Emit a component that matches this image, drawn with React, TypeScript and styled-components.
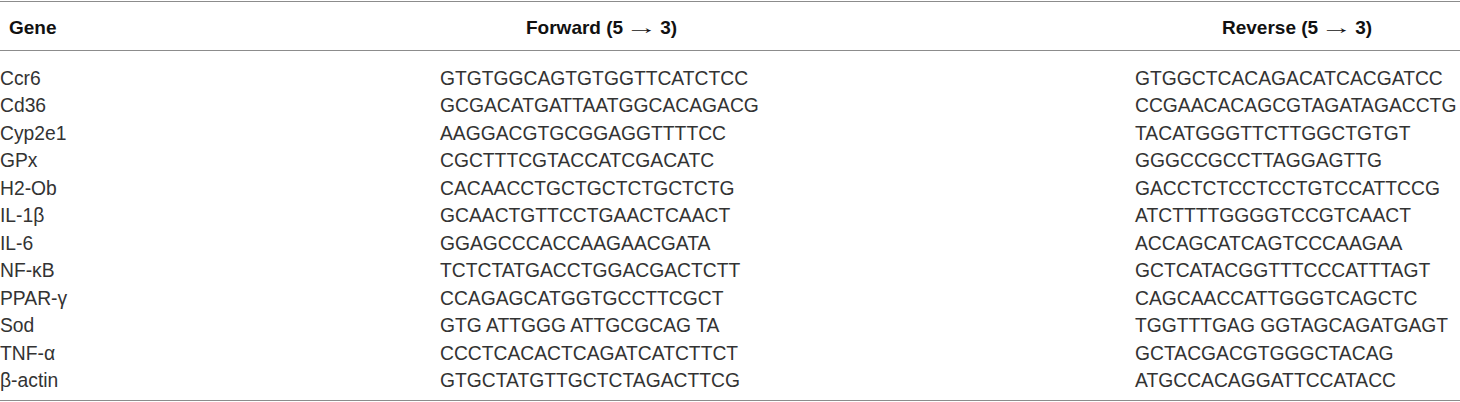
import React from 'react';
import styled, { createGlobalStyle } from 'styled-components';

const GlobalStyle = createGlobalStyle`
  body {
    margin: 0;
    background: #ffffff;
    font-family: "Liberation Sans", Arial, Helvetica, sans-serif;
  }
`;

const TableWrapper = styled.div`
  width: 1460px;
  margin-top: 1px;
  border-top: 1px solid #8c8c8c;
  border-bottom: 1px solid #8c8c8c;
`;

const Row = styled.div`
  display: grid;
  grid-template-columns: 440px 695px 1fr;
  font-size: 19.3px;
  line-height: 27.5px;
  white-space: nowrap;
`;

const HeaderRow = styled(Row)`
  padding: 12px 0 8px;
  border-bottom: 1px solid #8c8c8c;
  font-size: 19px;
`;

const HeadCell = styled.div<{ $indent: number }>`
  padding-left: ${(p) => p.$indent}px;
  font-weight: bold;
  color: #111111;
`;

const Arrow = styled.span`
  display: inline-block;
  font-weight: normal;
  font-size: 19px;
  line-height: 0;
  transform: scaleX(1.7);
  margin: 0 9px;
`;

const Body = styled.div`
  padding: 14px 0 5px;
`;

const Cell = styled.div`
  color: #333333;
`;

const rows: [string, string, string][] = [
  ['Ccr6', 'GTGTGGCAGTGTGGTTCATCTCC', 'GTGGCTCACAGACATCACGATCC'],
  ['Cd36', 'GCGACATGATTAATGGCACAGACG', 'CCGAACACAGCGTAGATAGACCTG'],
  ['Cyp2e1', 'AAGGACGTGCGGAGGTTTTCC', 'TACATGGGTTCTTGGCTGTGT'],
  ['GPx', 'CGCTTTCGTACCATCGACATC', 'GGGCCGCCTTAGGAGTTG'],
  ['H2-Ob', 'CACAACCTGCTGCTCTGCTCTG', 'GACCTCTCCTCCTGTCCATTCCG'],
  ['IL-1β', 'GCAACTGTTCCTGAACTCAACT', 'ATCTTTTGGGGTCCGTCAACT'],
  ['IL-6', 'GGAGCCCACCAAGAACGATA', 'ACCAGCATCAGTCCCAAGAA'],
  ['NF-κB', 'TCTCTATGACCTGGACGACTCTT', 'GCTCATACGGTTTCCCATTTAGT'],
  ['PPAR-γ', 'CCAGAGCATGGTGCCTTCGCT', 'CAGCAACCATTGGGTCAGCTC'],
  ['Sod', 'GTG ATTGGG ATTGCGCAG TA', 'TGGTTTGAG GGTAGCAGATGAGT'],
  ['TNF-α', 'CCCTCACACTCAGATCATCTTCT', 'GCTACGACGTGGGCTACAG'],
  ['β-actin', 'GTGCTATGTTGCTCTAGACTTCG', 'ATGCCACAGGATTCCATACC'],
];

const App = () => {
  return (
    <>
      <GlobalStyle />
      <TableWrapper>
        <HeaderRow>
          <HeadCell $indent={9}>Gene</HeadCell>
          <HeadCell $indent={86}>
            Forward (5<Arrow>→</Arrow>3)
          </HeadCell>
          <HeadCell $indent={87}>
            Reverse (5<Arrow>→</Arrow>3)
          </HeadCell>
        </HeaderRow>
        <Body>
          {rows.map(([gene, fwd, rev]) => (
            <Row key={gene}>
              <Cell>{gene}</Cell>
              <Cell>{fwd}</Cell>
              <Cell>{rev}</Cell>
            </Row>
          ))}
        </Body>
      </TableWrapper>
    </>
  );
};

export default App;
